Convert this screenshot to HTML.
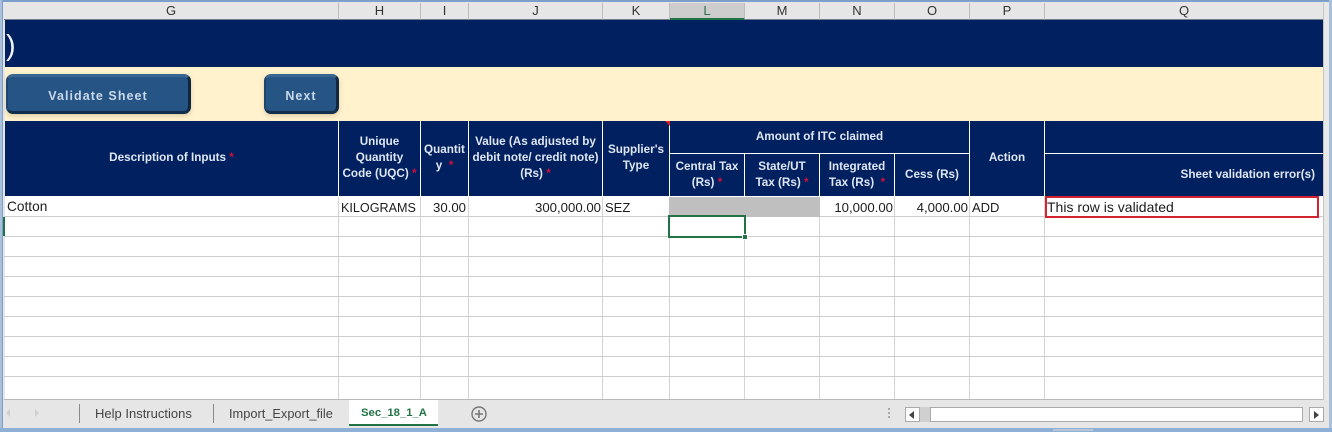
<!DOCTYPE html>
<html><head><meta charset="utf-8">
<style>
html,body{margin:0;padding:0}
body{width:1332px;height:432px;position:relative;overflow:hidden;background:#e6e6e6;font-family:"Liberation Sans",sans-serif}
.a{position:absolute}
.ch{position:absolute;top:3px;height:16px;background:#e6e6e6;border-right:1px solid #bdbdbd;border-bottom:1px solid #6f7f8f;text-align:center;font-size:13px;line-height:15px;color:#333;box-sizing:content-box}
.navy{background:#002060}
.vl{position:absolute;width:1px;background:#fff}
.hl{position:absolute;height:1px;background:#fff}
.gv{position:absolute;top:197px;height:203px;width:1px;background:#d4d4d4}
.gh{position:absolute;left:4px;width:1319px;height:1px;background:#cdcdcd}
.h{position:absolute;color:#dfe6f1;font-weight:bold;font-size:11.7px;line-height:16px;text-align:center;white-space:nowrap}
.h i{font-style:normal;color:#d0103a}
.d{position:absolute;font-size:13.7px;line-height:18px;color:#1c1c1c;white-space:nowrap;top:199px}
.r{text-align:right}
.btn{position:absolute;top:74px;height:40px;box-sizing:border-box;border-radius:7px;background:#255485;border-top:3px solid #3a6692;border-left:2px solid #1d4570;border-right:3px solid #10283f;border-bottom:3px solid #122f4e;box-shadow:0 2px 4px rgba(120,100,60,.25);color:#c9d9ea;font-weight:bold;font-size:12.5px;letter-spacing:1.05px;text-align:center;line-height:38px;font-family:"Liberation Sans",sans-serif}
.tab{position:absolute;top:402px;height:24px;font-size:13px;line-height:23px;color:#444;white-space:nowrap}
</style></head><body>
<div class="a" style="left:0;top:0;width:1332px;height:2px;background:#7d9fcb"></div>
<div class="a" style="left:0;top:0;width:3px;height:432px;background:#a9c0dc;border-right:1px solid #7d9fcb;box-sizing:border-box"></div>
<div class="a" style="left:1329px;top:0;width:3px;height:432px;background:#a9c0dc"></div>
<div class="a" style="left:0;top:428px;width:1332px;height:4px;background:#8fb0d6"></div>

<div class="ch" style="left:4px;width:334px">G</div>
<div class="ch" style="left:339px;width:81px">H</div>
<div class="ch" style="left:421px;width:47px">I</div>
<div class="ch" style="left:469px;width:133px">J</div>
<div class="ch" style="left:603px;width:66px">K</div>
<div class="ch" style="left:670px;width:74px;background:#cdcdcd;color:#2f6f4a;border-bottom:2px solid #217346;height:15px">L</div>
<div class="ch" style="left:745px;width:74px">M</div>
<div class="ch" style="left:820px;width:74px">N</div>
<div class="ch" style="left:895px;width:74px">O</div>
<div class="ch" style="left:970px;width:74px">P</div>
<div class="ch" style="left:1045px;width:278px;border-right:0">Q</div>
<div class="a" style="left:1323px;top:3px;width:6px;height:397px;background:#e8e8e8;border-left:1px solid #c4c4c4;box-sizing:border-box"></div>

<div class="a navy" style="left:5px;top:20px;width:1318px;height:47px"></div>
<div class="a" style="left:6px;top:28px;color:#f0f3f8;font-size:29px;line-height:36px;font-family:'Liberation Sans',sans-serif">)</div>
<div class="a" style="left:5px;top:67px;width:1318px;height:54px;background:#fff2cc"></div>
<div class="btn" style="left:6px;width:185px">Validate Sheet</div>
<div class="btn" style="left:264px;width:75px">Next</div>

<div class="a" style="left:5px;top:121px;width:1318px;height:75px;background:#002060"></div>
<div class="vl" style="left:338px;top:121px;height:75px"></div>
<div class="vl" style="left:420px;top:121px;height:75px"></div>
<div class="vl" style="left:468px;top:121px;height:75px"></div>
<div class="vl" style="left:602px;top:121px;height:75px"></div>
<div class="vl" style="left:669px;top:121px;height:75px"></div>
<div class="vl" style="left:969px;top:121px;height:75px"></div>
<div class="vl" style="left:1044px;top:121px;height:75px"></div>
<div class="vl" style="left:744px;top:153px;height:43px"></div>
<div class="vl" style="left:819px;top:153px;height:43px"></div>
<div class="vl" style="left:894px;top:153px;height:43px"></div>
<div class="hl" style="left:670px;top:153px;width:299px"></div>
<div class="hl" style="left:1045px;top:153px;width:278px"></div>
<div class="a" style="left:665px;top:121px;width:0;height:0;border-top:5px solid #e02020;border-left:5px solid transparent"></div>

<div class="h" style="left:5px;width:333px;top:150px">Description of Inputs <i>*</i></div>
<div class="h" style="left:339px;width:81px;top:134px">Unique<br>Quantity<br>Code (UQC) <i>*</i></div>
<div class="h" style="left:421px;width:47px;top:142px">Quantit<br>y&nbsp; <i>*</i></div>
<div class="h" style="left:469px;width:133px;top:134px">Value (As adjusted by<br>debit note/ credit note)<br>(Rs) <i>*</i></div>
<div class="h" style="left:603px;width:66px;top:142px">Supplier's<br>Type</div>
<div class="h" style="left:670px;width:299px;top:129px">Amount of ITC claimed</div>
<div class="h" style="left:670px;width:74px;top:159px">Central Tax<br>(Rs) <i>*</i></div>
<div class="h" style="left:745px;width:74px;top:159px">State/UT<br>Tax (Rs) <i>*</i></div>
<div class="h" style="left:820px;width:74px;top:159px">Integrated<br>Tax (Rs)&nbsp; <i>*</i></div>
<div class="h" style="left:895px;width:74px;top:167px">Cess (Rs)</div>
<div class="h" style="left:970px;width:74px;top:150px">Action</div>
<div class="h" style="left:1045px;width:270px;top:167px;text-align:right">Sheet validation error(s)</div>

<div class="a" style="left:5px;top:196px;width:1318px;height:204px;background:#fff"></div>
<div class="gv" style="left:338px"></div><div class="gv" style="left:420px"></div><div class="gv" style="left:468px"></div><div class="gv" style="left:602px"></div><div class="gv" style="left:669px"></div><div class="gv" style="left:744px"></div><div class="gv" style="left:819px"></div><div class="gv" style="left:894px"></div><div class="gv" style="left:969px"></div><div class="gv" style="left:1044px"></div>
<div class="gh" style="top:216px"></div><div class="gh" style="top:236px"></div><div class="gh" style="top:256px"></div><div class="gh" style="top:276px"></div><div class="gh" style="top:296px"></div><div class="gh" style="top:316px"></div><div class="gh" style="top:336px"></div><div class="gh" style="top:356px"></div><div class="gh" style="top:376px"></div><div class="gh" style="top:399px;background:#b8b8b8"></div>

<div class="a" style="left:669px;top:197px;width:151px;height:20px;background:#bfbfbf"></div>
<div class="a" style="left:3px;top:217px;width:2px;height:19px;background:#217346"></div>

<div class="d" style="left:7px;top:198px">Cotton</div>
<div class="d" style="left:341px;font-size:12.6px">KILOGRAMS</div>
<div class="d r" style="left:421px;width:45px;font-size:13.2px">30.00</div>
<div class="d r" style="left:469px;width:132px;font-size:13.2px">300,000.00</div>
<div class="d" style="left:605px;font-size:13px">SEZ</div>
<div class="d r" style="left:820px;width:73px;font-size:13.2px">10,000.00</div>
<div class="d r" style="left:895px;width:73px;font-size:13.2px">4,000.00</div>
<div class="d" style="left:972px;font-size:13px">ADD</div>
<div class="d" style="left:1047px;font-size:14px;top:198px">This row is validated</div>
<div class="a" style="left:1045px;top:196px;width:274px;height:22px;border:2px solid #d2232f;box-sizing:border-box"></div>
<div class="a" style="left:668px;top:215px;width:78px;height:23px;border:2px solid #217346;box-sizing:border-box"></div>
<div class="a" style="left:742px;top:234px;width:4px;height:4px;background:#217346;border:1px solid #fff"></div>

<div class="a" style="left:4px;top:400px;width:1325px;height:28px;background:#e6e6e6"></div>
<div class="a" style="left:6px;top:409px;width:0;height:0;border-right:4px solid #cfcfcf;border-top:4px solid transparent;border-bottom:4px solid transparent"></div>
<div class="a" style="left:35px;top:409px;width:0;height:0;border-left:4px solid #cfcfcf;border-top:4px solid transparent;border-bottom:4px solid transparent"></div>
<div class="a" style="left:79px;top:404px;width:1px;height:19px;background:#8a8a8a"></div>
<div class="tab" style="left:95px;font-size:13px">Help Instructions</div>
<div class="a" style="left:213px;top:404px;width:1px;height:19px;background:#8a8a8a"></div>
<div class="tab" style="left:229px;font-size:12.8px">Import_Export_file</div>
<div class="a" style="left:349px;top:400px;width:89px;height:24px;background:#fff;border-bottom:2px solid #217346"></div>
<div class="tab" style="left:361px;color:#217346;font-weight:bold;font-size:11.3px">Sec_18_1_A</div>
<svg class="a" style="left:470px;top:405px" width="18" height="18" viewBox="0 0 18 18"><circle cx="9" cy="9" r="7" fill="none" stroke="#777" stroke-width="1.4"/><path d="M5 9h8M9 5v8" stroke="#777" stroke-width="1.6"/></svg>

<div class="a" style="left:888px;top:408px;width:2px;height:2px;background:#aaa;box-shadow:0 4px 0 #aaa,0 8px 0 #aaa"></div>
<div class="a" style="left:905px;top:407px;width:15px;height:15px;background:#fff;border:1px solid #aaa;box-sizing:border-box"></div>
<div class="a" style="left:909px;top:411px;width:0;height:0;border-right:5px solid #444;border-top:4px solid transparent;border-bottom:4px solid transparent"></div>
<div class="a" style="left:920px;top:407px;width:10px;height:15px;background:#d0d0d0"></div>
<div class="a" style="left:930px;top:407px;width:373px;height:15px;background:#fff;border:1px solid #aaa;box-sizing:border-box"></div>
<div class="a" style="left:1309px;top:407px;width:15px;height:15px;background:#fff;border:1px solid #aaa;box-sizing:border-box"></div>
<div class="a" style="left:1314px;top:411px;width:0;height:0;border-left:5px solid #444;border-top:4px solid transparent;border-bottom:4px solid transparent"></div>
<div class="a" style="left:1053px;top:429px;width:40px;height:2px;background:#b8c6d6"></div>
</body></html>
